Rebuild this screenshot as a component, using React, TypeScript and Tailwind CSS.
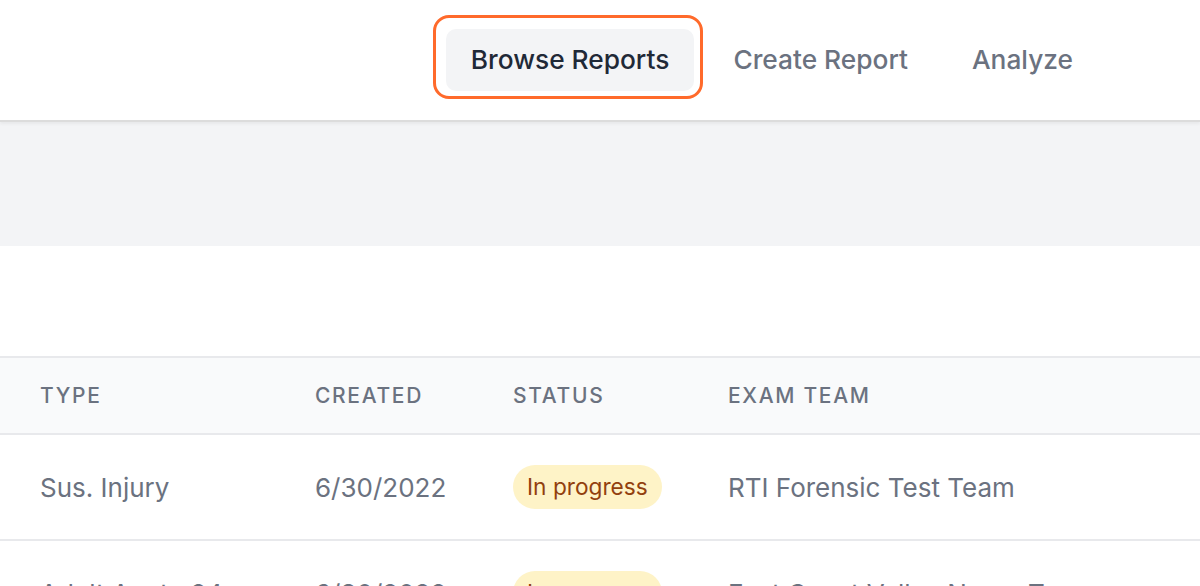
import React from "react";

const font = { fontFamily: "Inter, 'Noto Sans', sans-serif" };

function Row({ type, created, team }: { type: string; created: string; team: string }) {
  return (
    <div className="grid grid-cols-[275px_198px_215px_1fr] pl-[40px] h-[106px] items-center border-b-2 border-[#e8e9ec] text-[26px] text-[#6b7280] whitespace-nowrap">
      <div>{type}</div>
      <div>{created}</div>
      <div>
        <span className="inline-flex items-center h-[44px] px-[14px] rounded-full bg-[#fef3c7] text-[#92400e] text-[22.7px]">
          In progress
        </span>
      </div>
      <div>{team}</div>
    </div>
  );
}

export default function App() {
  return (
    <div className="w-[1200px] h-[586px] overflow-hidden bg-white" style={font}>
      <header className="h-[122px] flex items-start justify-end pr-[102px] border-b-2 border-[#dcdcdc] shadow-[0_2px_3px_rgba(0,0,0,0.05)] relative z-10 bg-white">
        <nav className="flex items-center gap-[14px] mt-[29px] text-[26.3px] font-medium whitespace-nowrap">
          <div className="relative">
            <span className="absolute left-[-13px] top-[-14px] right-[-9px] bottom-[-8px] rounded-[16px] border-[3.5px] border-[#ff6a2b]" />
            <button className="h-[62px] px-[25px] rounded-[10px] bg-[#f3f4f6] text-[#1f2937]">Browse Reports</button>
          </div>
          <button className="h-[62px] px-[25px] rounded-[10px] text-[#6b7280]">Create Report</button>
          <button className="h-[62px] px-[25px] rounded-[10px] text-[#6b7280]">Analyze</button>
        </nav>
      </header>
      <div className="h-[124px] bg-[#f3f4f6]" />
      <div className="h-[110px]" />
      <div className="border-t-2 border-[#e8e9ec]">
        <div className="grid grid-cols-[275px_198px_215px_1fr] pl-[40px] h-[77px] items-center bg-[#f9fafb] border-b-2 border-[#e8e9ec] text-[21px] font-medium uppercase tracking-[0.08em] text-[#6b7280]">
          <div>Type</div>
          <div>Created</div>
          <div>Status</div>
          <div>Exam Team</div>
        </div>
        <Row type="Sus. Injury" created="6/30/2022" team="RTI Forensic Test Team" />
        <Row type="Adult Acute 24" created="6/30/2022" team="East Coast Valley Nurse Team" />
      </div>
    </div>
  );
}
